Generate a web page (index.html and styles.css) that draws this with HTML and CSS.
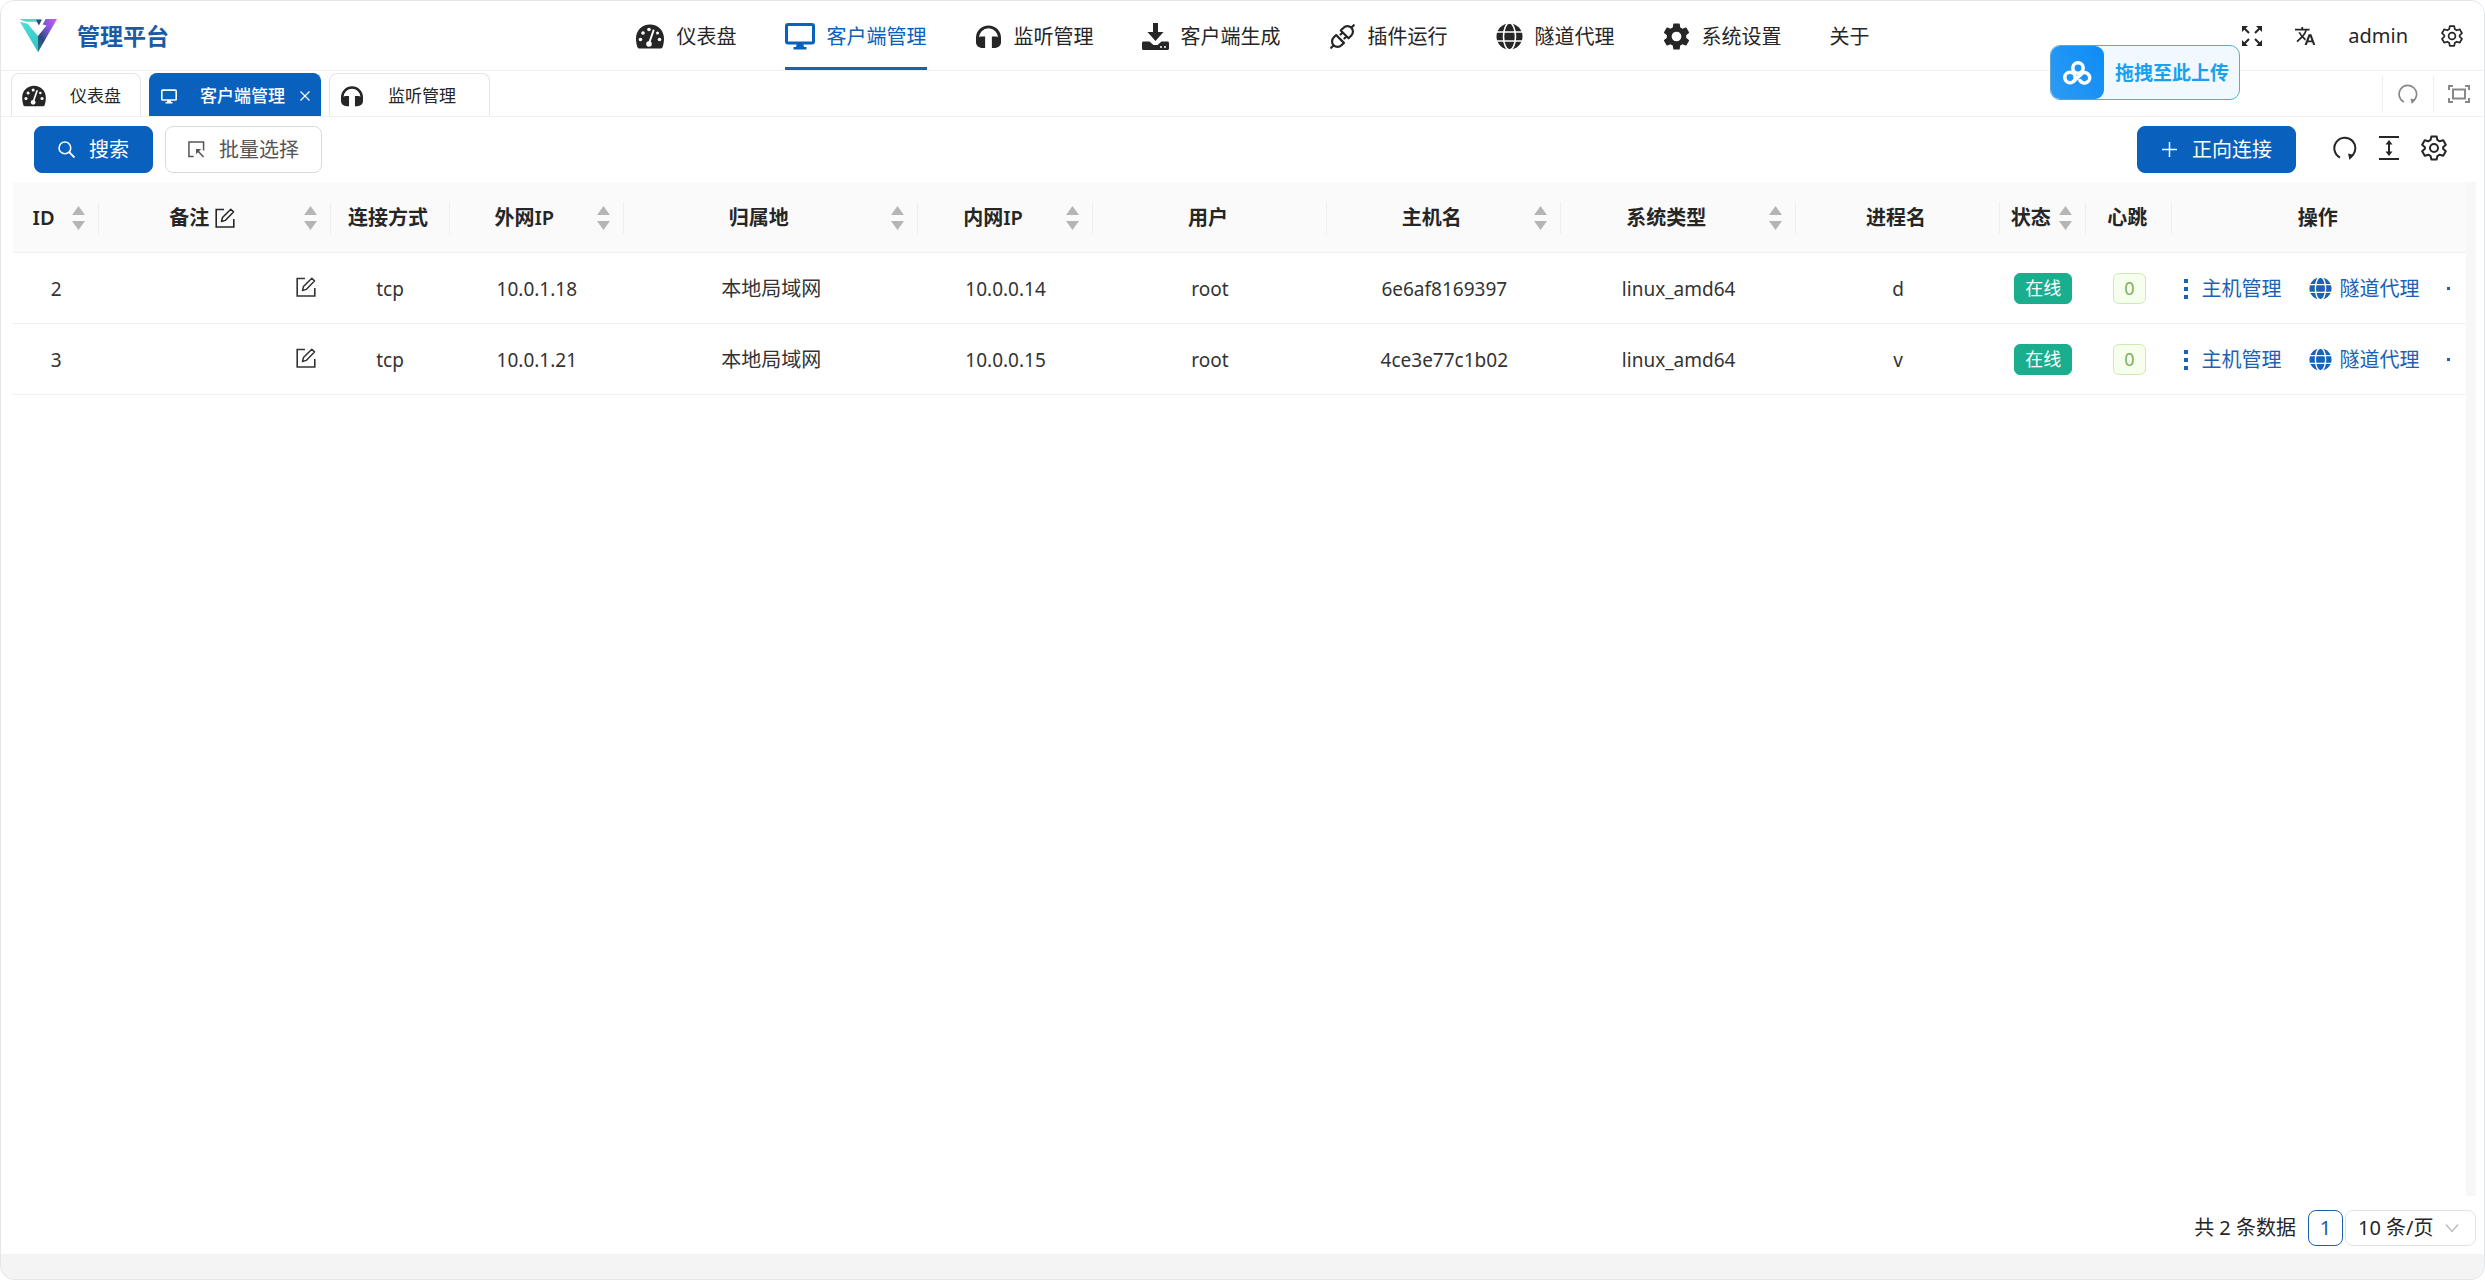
FILE: index.html
```html
<!DOCTYPE html>
<html lang="zh-CN">
<head>
  <meta charset="UTF-8">
  <meta name="viewport" content="width=device-width, initial-scale=1.0">
  <title>管理平台</title>
  <link rel="stylesheet" href="styles.css">
</head>
<body>
  <!-- icon sprite -->
  <svg class="sprite" aria-hidden="true">
    <symbol id="i-dashboard" viewBox="0 0 30 26">
      <path d="M15 1C7 1 1 7 1 15c0 3 .5 5.700 1.200 8 .3 1.200.8 2 2 2h21.600c1.200 0 1.700-.8 2-2 .7-2.300 1.200-5 1.200-8C29 7 23 1 15 1z" fill="currentColor"/>
      <g fill="#fff"><circle cx="5.500" cy="16" r="1.800"/><circle cx="8" cy="9.500" r="1.800"/><circle cx="14" cy="6" r="1.800"/><circle cx="24.500" cy="16" r="1.800"/><circle cx="22.500" cy="9.500" r="1.500"/><circle cx="14" cy="20.500" r="2.800"/></g>
      <path d="M14 20L18.500 7" stroke="#fff" stroke-width="2" stroke-linecap="round"/>
    </symbol>
    <symbol id="i-monitor" viewBox="0 0 30 27">
      <rect x="1.500" y="1.500" width="27" height="18.500" rx="1.500" fill="none" stroke="currentColor" stroke-width="3"/>
      <path d="M12 20h6l1 4h2.500v2.500h-13V24H11z" fill="currentColor"/>
    </symbol>
    <symbol id="i-headphone" viewBox="0 0 28 26">
      <path d="M2.500 18v-3.500a11.500 11.500 0 0 1 23 0V18" fill="none" stroke="currentColor" stroke-width="3"/>
      <path d="M7 13h3.500v12H8c-4 0-7-2.500-7-6s2.500-6 6-6zM21 13h-3.500v12H20c4 0 7-2.500 7-6s-2.500-6-6-6z" fill="currentColor"/>
    </symbol>
    <symbol id="i-download" viewBox="0 0 27 27">
      <path d="M11 0h5v9h5.500l-8 9-8-9H11zM1.500 18.500h6l4 3.500h4l4-3.500h6c.8 0 1.500.6 1.500 1.500v5.500c0 .9-.7 1.500-1.500 1.500h-24C.7 27 0 26.400 0 25.500V20c0-.9.7-1.500 1.500-1.500z" fill="currentColor"/>
      <circle cx="19" cy="24" r="1" fill="#fff"/><circle cx="23" cy="24" r="1" fill="#fff"/>
    </symbol>
    <symbol id="i-plug" viewBox="0 0 27 27">
      <g fill="none" stroke="currentColor" stroke-width="2.200" stroke-linecap="round" stroke-linejoin="round" transform="rotate(45 13.500 13.500)">
        <path d="M8 10.500h11V6.500a5.500 5.500 0 0 0-11 0zM13.500 1v-3.500M8 17h11v3.500a5.500 5.500 0 0 1-11 0zM13.500 26v3.500M10.800 10.500v3M16.200 10.500v3"/>
      </g>
    </symbol>
    <symbol id="i-globe" viewBox="0 0 27 27">
      <circle cx="13.500" cy="13.500" r="13" fill="currentColor"/>
      <g fill="none" stroke="#fff" stroke-width="1.600"><ellipse cx="13.500" cy="13.500" rx="6" ry="13.500"/><path d="M0 9h27M0 18h27"/></g>
    </symbol>
    <symbol id="i-cog" viewBox="2 2 20 20">
      <path fill="currentColor" fill-rule="evenodd" d="M19.140 12.940c.04-.3.060-.61.060-.94 0-.32-.02-.64-.07-.94l2.030-1.580c.18-.14.230-.41.120-.61l-1.920-3.320c-.12-.22-.37-.29-.59-.22l-2.390.96c-.5-.38-1.030-.7-1.620-.94l-.36-2.540c-.04-.24-.24-.41-.48-.41h-3.840c-.24 0-.43.170-.47.410l-.36 2.540c-.59.240-1.130.570-1.620.940l-2.390-.96c-.22-.08-.47 0-.59.220L2.740 8.870c-.12.210-.08.470.120.610l2.030 1.580c-.05.300-.09.630-.09.940s.02.640.070.940l-2.030 1.580c-.18.140-.23.410-.12.610l1.920 3.320c.12.220.370.290.590.220l2.390-.96c.5.380 1.030.7 1.620.940l.36 2.540c.05.240.240.410.480.410h3.840c.24 0 .440-.17.470-.41l.36-2.540c.59-.24 1.130-.56 1.620-.94l2.390.96c.22.080.470 0 .590-.22l1.920-3.320c.12-.22.070-.47-.12-.61zM12 15.600a3.600 3.600 0 1 1 0-7.200 3.600 3.600 0 0 1 0 7.200z"/>
    </symbol>
    <symbol id="i-setting" viewBox="1 1 22 22">
      <g fill="none" stroke="currentColor" stroke-width="1.700" stroke-linejoin="round">
        <path d="M9.800 2.200h4.400l.7 3 1.900 1.100 3-.9 2.200 3.800-2.300 2.100v1.400l2.300 2.100-2.200 3.800-3-.9-1.900 1.100-.7 3H9.800l-.7-3-1.900-1.100-3 .9L2 14.800l2.300-2.100v-1.400L2 9.200l2.200-3.800 3 .9 1.900-1.100z"/>
        <circle cx="12" cy="12" r="3.400"/>
      </g>
    </symbol>
    <symbol id="i-expand" viewBox="0 0 20 20">
      <path d="M0 0h6L0 6zM20 0h-6l6 6zM0 20h6l-6-6zM20 20h-6l6-6z" fill="currentColor"/>
      <path d="M2 2l5 5M18 2l-5 5M2 18l5-5M18 18l-5-5" stroke="currentColor" stroke-width="2"/>
    </symbol>
    <symbol id="i-translate" viewBox="1 2 22 20">
      <path fill="currentColor" d="M12.870 15.070l-2.540-2.510.03-.03A17.500 17.500 0 0 0 14.070 6H17V4h-7V2H8v2H1v2h11.170A15.600 15.600 0 0 1 9 11.350 15.600 15.600 0 0 1 6.690 8h-2a17.600 17.600 0 0 0 2.980 4.560l-5.090 5.020L4 19l5-5 3.110 3.110zM19 10h-3l-4.500 12H14l1.120-3h4.750L21 22h2.500zm-3.120 7l1.620-4.330L19.120 17z"/>
    </symbol>
    <symbol id="i-redo" viewBox="0 0 24 24">
      <path d="M7 21.500A10.500 10.500 0 1 1 17.500 21" fill="none" stroke="currentColor" stroke-width="2"/>
      <path d="M15 17.500l6 1.500-4.500 5z" fill="currentColor"/>
    </symbol>
    <symbol id="i-full" viewBox="0 0 22 18">
      <path d="M1 5V1h4M17 1h4v4M21 13v4h-4M5 17H1v-4M5 4.500h12v9H5z" fill="none" stroke="currentColor" stroke-width="2"/>
    </symbol>
    <symbol id="i-height" viewBox="0 0 20 24">
      <path d="M0 1h20M0 23h20M10 6v12" stroke="currentColor" stroke-width="2"/>
      <path d="M10 4l3.500 4.500h-7zM10 20l3.500-4.500h-7z" fill="currentColor"/>
    </symbol>
    <symbol id="i-search" viewBox="0 0 16 16">
      <circle cx="6.500" cy="6.500" r="5.500" fill="none" stroke="currentColor" stroke-width="1.500"/>
      <path d="M10.500 10.500L15.500 15.500" stroke="currentColor" stroke-width="1.800"/>
    </symbol>
    <symbol id="i-select" viewBox="0 0 18 18">
      <path d="M6 16.500H1V1h15.500v5M16.500 6v4M9.500 9.500l7 7.500" fill="none" stroke="currentColor" stroke-width="1.600"/>
      <path d="M8.500 8.500h5.500l-5.500 5.500z" fill="currentColor"/>
    </symbol>
    <symbol id="i-plus" viewBox="0 0 16 16">
      <path d="M8 1v14M1 8h14" stroke="currentColor" stroke-width="1.400"/>
    </symbol>
    <symbol id="i-edit" viewBox="0 0 20 20">
      <path d="M9 1.500H1.200V19H18.800V11" fill="none" stroke="currentColor" stroke-width="1.600"/>
      <path d="M6.500 13.500l1-4L15.800 1.200l2.700 2.700-8.300 8.500z" fill="none" stroke="currentColor" stroke-width="1.500" stroke-linejoin="round"/>
    </symbol>
    <symbol id="i-close" viewBox="0 0 12 12">
      <path d="M1.500 1.500l9 9M10.500 1.500l-9 9" stroke="currentColor" stroke-width="1.200"/>
    </symbol>
    <symbol id="i-dots" viewBox="0 0 4 20">
      <path d="M0 0h4v4H0zM0 8h4v4H0zM0 16h4v4H0z" fill="currentColor"/>
    </symbol>
    <symbol id="i-down" viewBox="0 0 14 10">
      <path d="M1 1.500l6 7 6-7" fill="none" stroke="currentColor" stroke-width="1.400"/>
    </symbol>
    <symbol id="i-sort" viewBox="0 0 13 24">
      <path d="M6.500 0L13 9H0zM6.500 24L13 15H0z" fill="currentColor"/>
    </symbol>
  </svg>

  <div class="app">
    <header class="header">
      <a class="brand" href="#">
        <svg class="logo" viewBox="0 0 40 35">
          <defs>
            <linearGradient id="g1" x1="0" y1="0" x2="0.600" y2="1"><stop offset="0" stop-color="#4fe3dc"/><stop offset="1" stop-color="#35c6c6"/></linearGradient>
            <linearGradient id="g2" x1="1" y1="0" x2="0" y2="1"><stop offset="0" stop-color="#d95bf0"/><stop offset="0.400" stop-color="#7a55d8"/><stop offset="0.700" stop-color="#2c4a7c"/><stop offset="1" stop-color="#1d7f88"/></linearGradient>
          </defs>
          <path d="M0 0h24l-3 6-3-3H7z" fill="#45dccb"/>
          <path d="M1 3l8 2 11 13v17z" fill="url(#g1)"/>
          <path d="M28 0h12L20 35V18l9-11-4-1z" fill="url(#g2)"/>
          <path d="M18 1h6l-3 6z" fill="#27506a"/>
        </svg>
        <span>管理平台</span>
      </a>
      <nav class="menu">
        <a href="#"><svg class="wide"><use href="#i-dashboard"/></svg>仪表盘</a>
        <a href="#" class="active"><svg class="wide"><use href="#i-monitor"/></svg>客户端管理</a>
        <a href="#"><svg><use href="#i-headphone"/></svg>监听管理</a>
        <a href="#"><svg><use href="#i-download"/></svg>客户端生成</a>
        <a href="#"><svg><use href="#i-plug"/></svg>插件运行</a>
        <a href="#"><svg><use href="#i-globe"/></svg>隧道代理</a>
        <a href="#"><svg><use href="#i-cog"/></svg>系统设置</a>
        <a href="#">关于</a>
      </nav>
      <div class="actions">
        <button aria-label="全屏"><svg><use href="#i-expand"/></svg></button>
        <button aria-label="语言"><svg><use href="#i-translate"/></svg></button>
        <button class="user">admin</button>
        <button aria-label="设置"><svg class="lg"><use href="#i-setting"/></svg></button>
      </div>
    </header>

    <div class="tabs">
      <a class="tab" href="#"><svg class="tab-icon"><use href="#i-dashboard"/></svg>仪表盘</a>
      <a class="tab active" href="#"><svg class="tab-icon"><use href="#i-monitor"/></svg>客户端管理<svg class="tab-close"><use href="#i-close"/></svg></a>
      <a class="tab closable" href="#"><svg class="tab-icon"><use href="#i-headphone"/></svg>监听管理</a>
      <div class="tabs-extra">
        <button aria-label="刷新"><svg class="redo"><use href="#i-redo"/></svg></button>
        <button aria-label="内容全屏"><svg class="full"><use href="#i-full"/></svg></button>
      </div>
    </div>

    <main class="content">
      <div class="toolbar">
        <button class="btn primary"><svg><use href="#i-search"/></svg>搜索</button>
        <button class="btn"><svg><use href="#i-select"/></svg>批量选择</button>
        <button class="btn primary right"><svg><use href="#i-plus"/></svg>正向连接</button>
        <div class="tools">
          <button aria-label="刷新"><svg><use href="#i-redo"/></svg></button>
          <button aria-label="密度"><svg class="height"><use href="#i-height"/></svg></button>
          <button aria-label="列设置"><svg class="cog"><use href="#i-setting"/></svg></button>
        </div>
      </div>

      <div class="table-wrap">
        <table>
          <colgroup>
            <col class="w-id"><col class="w-note"><col class="w-type"><col class="w-ip"><col class="w-area"><col class="w-ip"><col class="w-lg"><col class="w-lg"><col class="w-lg"><col class="w-proc"><col class="w-id"><col class="w-id"><col class="w-op">
          </colgroup>
          <thead>
            <tr>
              <th><div class="th"><span>ID</span><svg class="sort"><use href="#i-sort"/></svg></div></th>
              <th><div class="th"><span>备注 <svg class="edit"><use href="#i-edit"/></svg></span><svg class="sort"><use href="#i-sort"/></svg></div></th>
              <th><div class="th"><span>连接方式</span></div></th>
              <th><div class="th"><span>外网IP</span><svg class="sort"><use href="#i-sort"/></svg></div></th>
              <th><div class="th"><span>归属地</span><svg class="sort"><use href="#i-sort"/></svg></div></th>
              <th><div class="th"><span>内网IP</span><svg class="sort"><use href="#i-sort"/></svg></div></th>
              <th><div class="th"><span>用户</span></div></th>
              <th><div class="th"><span>主机名</span><svg class="sort"><use href="#i-sort"/></svg></div></th>
              <th><div class="th"><span>系统类型</span><svg class="sort"><use href="#i-sort"/></svg></div></th>
              <th><div class="th"><span>进程名</span></div></th>
              <th><div class="th"><span>状态</span><svg class="sort"><use href="#i-sort"/></svg></div></th>
              <th><div class="th"><span>心跳</span></div></th>
              <th><div class="th"><span>操作</span></div></th>
            </tr>
          </thead>
          <tbody>
            <tr>
              <td>2</td>
              <td class="note"><button aria-label="编辑备注"><svg class="edit"><use href="#i-edit"/></svg></button></td>
              <td>tcp</td>
              <td>10.0.1.18</td>
              <td class="area">本地局域网</td>
              <td>10.0.0.14</td>
              <td>root</td>
              <td>6e6af8169397</td>
              <td>linux_amd64</td>
              <td>d</td>
              <td><span class="tag online">在线</span></td>
              <td><span class="tag beat">0</span></td>
              <td><div class="ops">
                <a href="#"><svg class="dots"><use href="#i-dots"/></svg>主机管理</a>
                <a href="#"><svg class="globe"><use href="#i-globe"/></svg>隧道代理</a>
                <button class="more" aria-label="更多"></button>
              </div></td>
            </tr>
            <tr>
              <td>3</td>
              <td class="note"><button aria-label="编辑备注"><svg class="edit"><use href="#i-edit"/></svg></button></td>
              <td>tcp</td>
              <td>10.0.1.21</td>
              <td class="area">本地局域网</td>
              <td>10.0.0.15</td>
              <td>root</td>
              <td>4ce3e77c1b02</td>
              <td>linux_amd64</td>
              <td>v</td>
              <td><span class="tag online">在线</span></td>
              <td><span class="tag beat">0</span></td>
              <td><div class="ops">
                <a href="#"><svg class="dots"><use href="#i-dots"/></svg>主机管理</a>
                <a href="#"><svg class="globe"><use href="#i-globe"/></svg>隧道代理</a>
                <button class="more" aria-label="更多"></button>
              </div></td>
            </tr>
          </tbody>
        </table>
      </div>

      <div class="pager">
        <span>共 2 条数据</span>
        <button class="page">1</button>
        <label class="size">
          <select aria-label="每页条数"><option>10 条/页</option><option>20 条/页</option></select>
          <svg><use href="#i-down"/></svg>
        </label>
      </div>
    </main>

    <!-- floating drop target -->
    <div class="upload">
      <div class="upload-icon">
        <svg viewBox="0 0 30 24"><g fill="none" stroke="#fff" stroke-width="3.500" stroke-linecap="round"><circle cx="15" cy="7" r="5.200"/><circle cx="7" cy="16.500" r="5.200"/><path d="M17 19.500a5.200 5.200 0 1 0 2.500-7.500L11 20"/></g></svg>
      </div>
      <span>拖拽至此上传</span>
    </div>
  </div>
</body>
</html>
```
FILE: styles.css
```css
* {
  box-sizing: border-box;
}
html, body {
  margin: 0;
  height: 100%;
}
body {
  font-family: "Noto Sans", "Noto Sans CJK SC", sans-serif;
  font-size: 20px;
  line-height: 28px;
  color: #262626;
  background: #fff;
}
a {
  color: inherit;
  text-decoration: none;
}
button {
  font: inherit;
  color: inherit;
  background: none;
  border: none;
  padding: 0;
  cursor: pointer;
}
svg {
  display: block;
  flex: none;
}
.sprite {
  position: absolute;
  width: 0;
  height: 0;
}
.app {
  position: relative;
  display: flex;
  flex-direction: column;
  min-height: 100%;
  padding-bottom: 25px;
  background: #f4f4f4;
  border: 1px solid #e4e6e8;
  border-radius: 14px;
  overflow: hidden;
}

/* header */
.header {
  display: grid;
  grid-template-columns: 1fr auto 1fr;
  align-items: center;
  height: 70px;
  padding: 0 21px 0 18px;
  background: #fff;
  border-bottom: 1px solid #f0f0f0;
}
.brand {
  display: flex;
  align-items: center;
  gap: 20px;
  font-size: 23px;
  font-weight: bold;
  color: #1a5ba8;
}
.logo {
  width: 38px;
  height: 35px;
}
.menu {
  display: flex;
  gap: 48px;
  height: 69px;
  margin-left: 22px;
}
.menu a {
  display: flex;
  align-items: center;
  gap: 12px;
  border-bottom: 3px solid transparent;
  padding-top: 5px;
}
.menu svg {
  width: 27px;
  height: 27px;
}
.menu .wide {
  width: 30px;
}
.menu .active {
  color: #0960bd;
  border-color: #1565a8;
}
.actions {
  display: flex;
  justify-content: flex-end;
  align-items: center;
  gap: 33px;
}
.actions svg {
  width: 20px;
  height: 20px;
}
.actions .lg {
  width: 22px;
  height: 22px;
}

/* opened pages */
.tabs {
  display: flex;
  align-items: flex-end;
  gap: 8px;
  height: 46px;
  padding-left: 10px;
  background: #fff;
  border-bottom: 1px solid #f0f0f0;
}
.tab {
  display: flex;
  align-items: center;
  height: 43px;
  padding: 2px 19px 0 9px;
  font-size: 17px;
  border: 1px solid #e6e6e6;
  border-bottom: none;
  border-radius: 8px 8px 0 0;
}
.tab-icon {
  width: 26px;
  height: 22px;
  margin-right: 23px;
}
.tab.active {
  padding: 2px 9px 0 11px;
  color: #fff;
  font-weight: 500;
  background: #0960bd;
  border-color: #0960bd;
}
.tab.active .tab-icon {
  width: 16px;
  height: 15px;
}
.tab-close {
  width: 12px;
  height: 12px;
  margin-left: 14px;
}
.tab.closable {
  padding-right: 33px;
}
.tabs-extra {
  display: flex;
  align-self: stretch;
  align-items: center;
  margin-left: auto;
  color: #888;
}
.tabs-extra button {
  display: flex;
  align-items: center;
  justify-content: center;
  width: 51px;
  height: 36px;
  border-left: 1px solid #eee;
}
.redo {
  width: 20px;
  height: 20px;
}
.full {
  width: 22px;
  height: 18px;
}

/* content */
.content {
  flex: 1;
  display: flex;
  flex-direction: column;
  padding: 9px 8px 8px 12px;
  background: #fff;
}
.toolbar {
  display: flex;
  align-items: center;
  gap: 12px;
  padding: 0 29px 9px 21px;
}
.btn {
  display: flex;
  align-items: center;
  gap: 14px;
  height: 47px;
  padding: 0 22px;
  color: #555;
  border: 1px solid #d9d9e0;
  border-radius: 8px;
}
.btn svg {
  width: 17px;
  height: 17px;
}
.btn.primary {
  padding: 0 23px;
  color: #fff;
  background: #0960bd;
  border-color: #0960bd;
}
.btn.right {
  margin-left: auto;
}
.tools {
  display: flex;
  align-items: center;
  gap: 22px;
  margin-left: 25px;
  padding-bottom: 4px;
}
.tools svg {
  width: 24px;
  height: 24px;
}
.tools .height {
  width: 20px;
}
.tools .cog {
  width: 26px;
  height: 26px;
}

/* table */
.table-wrap {
  flex: 1;
  border-right: 10px solid #f7f7f7;
}
table {
  width: 100%;
  table-layout: fixed;
  border-collapse: collapse;
}
.w-id { width: 86px; }
.w-note { width: 231px; }
.w-lg { width: 234px; }
.w-type { width: 119px; }
.w-ip { width: 174px; }
.w-area { width: 294px; }
.w-proc { width: 204px; }
.w-op { width: 293px; }
th {
  height: 70px;
  padding: 3px 0 0;
  font-weight: 600;
  background: #fafafa;
  border-bottom: 1px solid #f0f0f0;
}
.th {
  display: flex;
  align-items: center;
  gap: 8px;
  height: 32px;
  padding: 0 13px 0 10px;
  border-right: 1px solid #eee;
  white-space: nowrap;
}
th:last-child .th {
  border-right: none;
}
.th span {
  display: flex;
  flex: 1;
  align-items: center;
  justify-content: center;
  gap: 6px;
}
.sort {
  width: 13px;
  height: 24px;
  color: #b5b5b5;
}
.edit {
  width: 20px;
  height: 20px;
}
td {
  height: 71px;
  padding: 2px 12px 0;
  font-size: 19px;
  text-align: center;
  color: #333;
  border-bottom: 1px solid #f0f0f0;
  white-space: nowrap;
}
.area {
  font-size: 20px;
}
.note {
  padding: 0 15px 2px;
}
.note button {
  display: block;
  margin-left: auto;
}
.tag {
  display: inline-block;
  height: 31px;
  line-height: 29px;
  padding: 0 10px;
  font-size: 18px;
  border: 1px solid;
  border-radius: 6px;
}
.online {
  color: #fff;
  background: #1aae8e;
  border-color: #1aae8e;
}
.beat {
  color: #7fae58;
  background: #f6ffed;
  border-color: #cdebb4;
}
.ops {
  display: flex;
  align-items: center;
  font-size: 20px;
  color: #1a62b5;
}
.ops a {
  display: flex;
  align-items: center;
  margin-right: 28px;
}
.dots {
  width: 4px;
  height: 20px;
  margin-right: 13px;
}
.globe {
  width: 23px;
  height: 23px;
  margin-right: 7px;
}
.more {
  width: 3px;
  height: 3px;
  background: #1a62b5;
}

/* pagination */
.pager {
  display: flex;
  justify-content: flex-end;
  align-items: center;
  padding-top: 14px;
}
.page {
  width: 35px;
  height: 36px;
  margin: 0 2px 0 12px;
  color: #1a5ba8;
  border: 1px solid #1a62b5;
  border-radius: 8px;
}
.size {
  display: flex;
  align-items: center;
  height: 36px;
  padding: 0 16px 0 12px;
  border: 1px solid #e2e2e2;
  border-radius: 8px;
}
.size select {
  appearance: none;
  width: 87px;
  padding: 0;
  font: inherit;
  color: inherit;
  background: none;
  border: none;
  outline: none;
}
.size svg {
  width: 14px;
  height: 10px;
  color: #bbb;
}

/* upload drop zone */
.upload {
  position: absolute;
  top: 44px;
  right: 244px;
  display: flex;
  align-items: center;
  width: 190px;
  height: 55px;
  font-size: 19px;
  font-weight: bold;
  color: #1aa0ee;
  background: #f1f9ff;
  border: 1px solid #5fa8cc;
  border-radius: 10px;
}
.upload-icon {
  display: flex;
  align-items: center;
  justify-content: center;
  width: 53px;
  height: 53px;
  margin-right: 11px;
  background: linear-gradient(60deg, #2c9bf5, #0d8cf5);
  border-radius: 9px;
}
.upload-icon svg {
  width: 30px;
  height: 24px;
}
```
